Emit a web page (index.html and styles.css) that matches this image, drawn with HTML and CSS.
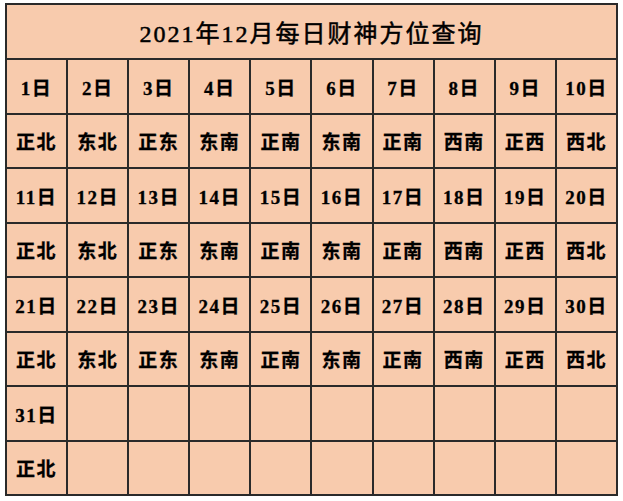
FILE: index.html
```html
<!DOCTYPE html>
<html lang="zh-CN">
<head>
<meta charset="utf-8">
<title>2021年12月每日财神方位查询</title>
<link rel="stylesheet" href="styles.css">
</head>
<body>
<div class="wrap">
<table class="cal">
  <tr class="title-row"><td colspan="10" class="title">2021年12月每日财神方位查询</td></tr>
  <tr><td>1日</td><td>2日</td><td>3日</td><td>4日</td><td>5日</td><td>6日</td><td>7日</td><td>8日</td><td>9日</td><td>10日</td></tr>
  <tr><td>正北</td><td>东北</td><td>正东</td><td>东南</td><td>正南</td><td>东南</td><td>正南</td><td>西南</td><td>正西</td><td>西北</td></tr>
  <tr><td>11日</td><td>12日</td><td>13日</td><td>14日</td><td>15日</td><td>16日</td><td>17日</td><td>18日</td><td>19日</td><td>20日</td></tr>
  <tr><td>正北</td><td>东北</td><td>正东</td><td>东南</td><td>正南</td><td>东南</td><td>正南</td><td>西南</td><td>正西</td><td>西北</td></tr>
  <tr><td>21日</td><td>22日</td><td>23日</td><td>24日</td><td>25日</td><td>26日</td><td>27日</td><td>28日</td><td>29日</td><td>30日</td></tr>
  <tr><td>正北</td><td>东北</td><td>正东</td><td>东南</td><td>正南</td><td>东南</td><td>正南</td><td>西南</td><td>正西</td><td>西北</td></tr>
  <tr><td>31日</td><td></td><td></td><td></td><td></td><td></td><td></td><td></td><td></td><td></td></tr>
  <tr><td>正北</td><td></td><td></td><td></td><td></td><td></td><td></td><td></td><td></td><td></td></tr>
</table>
</div>
</body>
</html>
```
FILE: styles.css
```css
html, body {
  margin: 0;
  padding: 0;
  background: #ffffff;
}
.wrap {
  padding: 3px 0 0 5px;
}
.cal {
  border-collapse: collapse;
  width: 613px;
  table-layout: fixed;
  background: #f8cbad;
  font-family: "Liberation Serif", "Noto Sans CJK SC", serif;
  font-weight: bold;
  color: #000;
}
.cal td {
  border: 2px solid #2a2a2a;
  text-align: center;
  vertical-align: middle;
  padding: 0;
  font-size: 19px;
  letter-spacing: 1.5px;
  height: 52.5px;
  white-space: nowrap;
  -webkit-text-stroke: 0.3px #000;
}
.cal .title {
  font-size: 24px;
  letter-spacing: 2px;
  font-weight: normal;
  height: 53px;
  -webkit-text-stroke: 0.5px #000;
}
```
